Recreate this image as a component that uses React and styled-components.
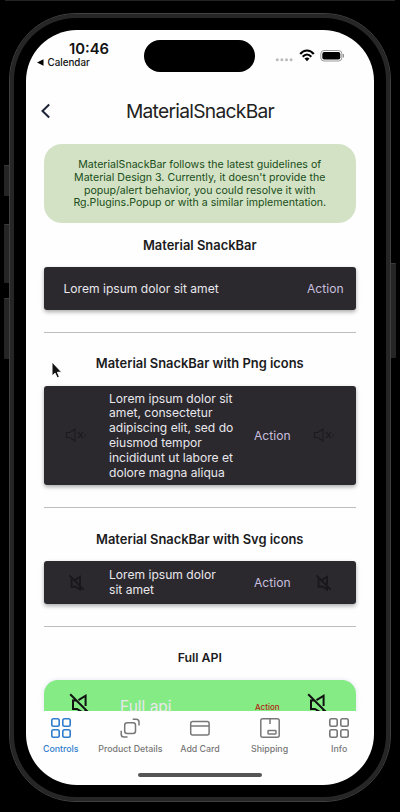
import React from "react";
import styled, { createGlobalStyle } from "styled-components";

const Global = createGlobalStyle`
  * { box-sizing: border-box; }
  html, body { margin: 0; background: #000; }
  body { font-family: Inter, "Liberation Sans", sans-serif; overflow: hidden; }
`;

const Stage = styled.div`
  position: relative;
  width: 400px;
  height: 812px;
  padding: 12.5px 9px 10px;
  background: #000;
  overflow: hidden;
`;

const TopEdge = styled.div`
  position: absolute;
  top: 0;
  left: 5px;
  width: 390px;
  height: 1px;
  background: #242424;
`;

const SideButton = styled.div`
  position: absolute;
  left: ${(p) => (p.$right ? 390 : 4)}px;
  top: ${(p) => p.$top}px;
  width: 6px;
  height: ${(p) => p.$height}px;
  background: #252525;
  border-top: 1px solid #3a3a3a;
  border-radius: ${(p) => (p.$right ? "0 1px 1px 0" : "1px 0 0 1px")};
`;

const Shell = styled.div`
  position: relative;
  display: flex;
  width: 382px;
  height: 789.5px;
  padding: 16px 16px 15.5px;
  border: 1.5px solid #404040;
  border-radius: 67px;
  background: #000;
  box-shadow: inset 0 0 0 4px #262626;
`;

const Screen = styled.div`
  width: 348px;
  height: 755px;
  border-radius: 51px;
  background: #fefefe;
  overflow: hidden;
  display: flex;
  flex-direction: column;
`;

const StatusBar = styled.header`
  display: grid;
  grid-template-columns: 118px 112px 1fr;
  height: 54px;
  flex: none;
`;

const ClockBlock = styled.div`
  padding-top: 11.5px;
  color: #111;
`;

const Clock = styled.div`
  padding-left: 43px;
  font-size: 14.8px;
  line-height: 16px;
  font-weight: 600;
  white-space: nowrap;
`;

const BackApp = styled.div`
  display: flex;
  align-items: center;
  gap: 3.5px;
  padding-left: 11px;
  font-size: 9.8px;
  line-height: 11px;
  font-weight: 500;
`;

const Island = styled.div`
  margin-top: 10px;
  width: 111px;
  height: 32.5px;
  border-radius: 17px;
  background: #000;
`;

const StatusIcons = styled.div`
  display: flex;
  gap: 5.5px;
  padding: 19px 0 0 19px;
`;

const TitleBar = styled.div`
  display: grid;
  grid-template-columns: 40px 1fr 40px;
  align-items: center;
  height: 54px;
  flex: none;
`;

const BackButton = styled.button`
  display: flex;
  padding: 0 0 0 14px;
  border: 0;
  background: none;
`;

const Title = styled.h1`
  margin: 0;
  text-align: center;
  font-size: 19.2px;
  font-weight: 400;
  letter-spacing: -0.7px;
  color: #222;
  white-space: nowrap;
`;

const Content = styled.main`
  flex: none;
  height: 573px;
  padding: 6.5px 18px 0 17.5px;
  overflow: hidden;
`;

const Notice = styled.p`
  margin: 0;
  height: 79px;
  padding-top: 15.3px;
  border-radius: 18px;
  background: #d3e2c4;
  color: #1a4d1a;
  text-align: center;
  font-size: 10.6px;
  line-height: 12.67px;
  white-space: pre;
`;

const Heading = styled.h2`
  margin: 0;
  height: ${(p) => (p.$first ? 44 : 53)}px;
  padding-top: ${(p) => (p.$first ? 0 : 9)}px;
  display: flex;
  align-items: center;
  justify-content: center;
  font-size: ${(p) => (p.$short ? 12.3 : 12.9)}px;
  font-weight: 600;
  color: #1b1b1d;
  white-space: nowrap;
`;

const SnackBar = styled.div`
  display: grid;
  grid-template-columns: ${(p) => (p.$icons ? "65.5px 145px 1fr 65px" : "20px 1fr 49px")};
  align-items: center;
  height: ${(p) => p.$height}px;
  border-radius: ${(p) => (p.$full ? 14 : 3)}px;
  background: ${(p) => (p.$full ? "#85eb85" : "#2b292e")};
  box-shadow: ${(p) => (p.$full ? "0 0 4px #9999dd40" : "0 2px 4px #00000055")};
`;

const Message = styled.div`
  color: #e9e7ec;
  font-size: ${(p) => (p.$large ? 15.5 : 12.1)}px;
  line-height: 14.8px;
  white-space: pre;
  padding-top: 1.4px;
  padding-left: ${(p) => (p.$large ? 11 : 0)}px;
`;

const ActionLabel = styled.button`
  border: 0;
  padding: 0 0 0 ${(p) => (p.$alert ? 1 : 0)}px;
  background: none;
  text-align: left;
  font-family: inherit;
  font-size: ${(p) => (p.$alert ? 8 : 12.1)}px;
  font-weight: ${(p) => (p.$alert ? 500 : 400)};
  color: ${(p) => (p.$alert ? "#b32616" : "#c8bfde")};
`;

const IconSlot = styled.div`
  display: flex;
  justify-content: center;
  align-items: center;
`;

const LargeIconSlot = styled.div`
  align-self: start;
  padding: 13.5px 0 0 ${(p) => (p.$trailing ? 16 : 25)}px;
`;

const Rule = styled.hr`
  margin: 22px 0 0;
  border: 0;
  height: 1px;
  background: #bdbdbd;
`;

const TabBar = styled.nav`
  display: grid;
  grid-template-columns: repeat(5, 69.6px);
  height: 60px;
  flex: none;
  padding-top: 6px;
`;

const Tab = styled.div`
  display: flex;
  flex-direction: column;
  align-items: center;
  gap: 4px;
  font-size: 8.8px;
  line-height: 12px;
  font-weight: 500;
  white-space: nowrap;
  color: ${(p) => (p.$active ? "#2f7dcc" : "#777")};
`;

const HomeIndicator = styled.div`
  width: 124px;
  height: 4.5px;
  margin: 2.3px auto 0;
  border-radius: 3px;
  background: #555;
`;

const Pointer = styled.svg`
  position: absolute;
  left: 50px;
  top: 360px;
`;

const Signal = () => (
  <svg width="18" height="14" viewBox="0 0 18 14" fill="#bbb">
    <circle cx="2.3" cy="10.8" r="1.5" />
    <circle cx="6.9" cy="10.8" r="1.5" />
    <circle cx="11.5" cy="10.8" r="1.5" />
    <circle cx="16.1" cy="10.8" r="1.5" />
  </svg>
);

const Wifi = () => (
  <svg width="16" height="14" viewBox="0 0 16 14" fill="none" stroke="#000" strokeWidth="2.1">
    <path d="M1.2 5C5 .4 11 .4 14.8 5M3.7 7.7C6.3 4.8 9.7 4.8 12.3 7.7" />
    <path d="M8 12.2 5.5 9.6q2.5-2 5 0z" fill="#000" stroke="none" />
  </svg>
);

const Battery = () => (
  <svg width="25" height="14" viewBox="0 0 25 14">
    <rect x="0.8" y="1.5" width="21" height="10.5" rx="3.2" fill="none" stroke="#999" />
    <rect x="2.3" y="3" width="18" height="7.5" rx="2" />
    <path d="M23.3 5v3.5" stroke="#888" strokeWidth="1.2" />
  </svg>
);

const SpeakerOff = () => (
  <svg width="22" height="16" viewBox="0 0 22 16" fill="none" stroke="#1d1b20" strokeWidth="1.2">
    <path d="M1.5 5.5H5L10 2v12l-5-3.5H1.5zM13 5l5 6M18 5l-5 6M20 7.5v2" />
  </svg>
);

const MutedIcon = () => (
  <svg width="17" height="17" viewBox="0 0 24 24" fill="none" stroke="#19171b" strokeWidth="2.6">
    <path d="M2 2l20 20M5 7v11h6l6 4v-5M9 9l8-5v11" />
  </svg>
);

const LargeMutedIcon = () => (
  <svg width="22" height="22" viewBox="0 0 22 22" fill="none" stroke="#111" strokeWidth="2">
    <path d="M1.2 1.2 20.5 20.5M7 7.6H4V16h4l8.4 5v-4M9.5 7.2l7.1-4.5v10.2" />
  </svg>
);

const GridIcon = () => (
  <svg width="22" height="22" viewBox="0 0 22 22" fill="none" stroke="currentColor" strokeWidth="1.6">
    <rect x="1.8" y="1.8" width="7.4" height="7.4" rx="1.7" />
    <rect x="12.8" y="1.8" width="7.4" height="7.4" rx="1.7" />
    <rect x="1.8" y="12.8" width="7.4" height="7.4" rx="1.7" />
    <rect x="12.8" y="12.8" width="7.4" height="7.4" rx="1.7" />
  </svg>
);

const LayersIcon = () => (
  <svg width="22" height="22" viewBox="0 0 22 22" fill="none" stroke="currentColor" strokeWidth="1.5">
    <rect x="5.7" y="5.7" width="10.8" height="10.8" rx="2.5" />
    <path d="M13.7 2.2h3.5q2.8 0 2.8 2.8v3.5M2.2 13.7v3.5Q2.2 20 5 20h3.5" />
  </svg>
);

const CardIcon = () => (
  <svg width="22" height="22" viewBox="0 0 22 22" fill="none" stroke="currentColor" strokeWidth="1.5">
    <rect x="1.7" y="4.5" width="18.4" height="13.4" rx="2" />
    <path d="M2 9h18" />
  </svg>
);

const BoxIcon = () => (
  <svg width="22" height="22" viewBox="0 0 22 22" fill="none" stroke="currentColor" strokeWidth="1.5">
    <rect x="1.8" y="1.8" width="18.4" height="18.4" rx="2" />
    <path d="M11 2v5" />
    <rect x="9" y="13.5" width="8" height="3.5" rx=".7" />
  </svg>
);

const tabs = [
  ["Controls", GridIcon],
  ["Product Details", LayersIcon],
  ["Add Card", CardIcon],
  ["Shipping", BoxIcon],
  ["Info", GridIcon],
];

export default function App() {
  return (
    <Stage>
      <Global />
      <TopEdge />
      <SideButton $top={165} $height={31} />
      <SideButton $top={224} $height={59} />
      <SideButton $top={298} $height={61} />
      <SideButton $right $top={263} $height={95} />
      <Shell>
        <Screen>
          <StatusBar>
            <ClockBlock>
              <Clock>10:46</Clock>
              <BackApp>
                <svg width="7" height="7" viewBox="0 0 7 7"><path d="M0 3.5 6.5.3v6.4z" /></svg>
                Calendar
              </BackApp>
            </ClockBlock>
            <Island />
            <StatusIcons>
              <Signal />
              <Wifi />
              <Battery />
            </StatusIcons>
          </StatusBar>
          <TitleBar>
            <BackButton>
              <svg width="12" height="16" viewBox="0 0 12 16" fill="none" stroke="#1e2438" strokeWidth="2">
                <path d="M9.2 1.5 2.5 8l6.7 6.5" />
              </svg>
            </BackButton>
            <Title>MaterialSnackBar</Title>
          </TitleBar>
          <Content>
            <Notice>{"MaterialSnackBar follows the latest guidelines of\nMaterial Design 3. Currently, it doesn't provide the\npopup/alert behavior, you could resolve it with\nRg.Plugins.Popup or with a similar implementation."}</Notice>
            <Heading $first>Material SnackBar</Heading>
            <SnackBar $height={42.5}>
              <span />
              <Message>Lorem ipsum dolor sit amet</Message>
              <ActionLabel>Action</ActionLabel>
            </SnackBar>
            <Rule />
            <Heading>Material SnackBar with Png icons</Heading>
            <SnackBar $icons $height={99.5}>
              <IconSlot><SpeakerOff /></IconSlot>
              <Message>{"Lorem ipsum dolor sit\namet, consectetur\nadipiscing elit, sed do\neiusmod tempor\nincididunt ut labore et\ndolore magna aliqua"}</Message>
              <ActionLabel>Action</ActionLabel>
              <IconSlot><SpeakerOff /></IconSlot>
            </SnackBar>
            <Rule />
            <Heading>Material SnackBar with Svg icons</Heading>
            <SnackBar $icons $height={42.5}>
              <IconSlot><MutedIcon /></IconSlot>
              <Message>{"Lorem ipsum dolor\nsit amet"}</Message>
              <ActionLabel>Action</ActionLabel>
              <IconSlot><MutedIcon /></IconSlot>
            </SnackBar>
            <Rule />
            <Heading $short>Full API</Heading>
            <SnackBar $icons $full $height={54}>
              <LargeIconSlot><LargeMutedIcon /></LargeIconSlot>
              <Message $large>Full api</Message>
              <ActionLabel $alert>Action</ActionLabel>
              <LargeIconSlot $trailing><LargeMutedIcon /></LargeIconSlot>
            </SnackBar>
          </Content>
          <TabBar>
            {tabs.map(([label, Icon], i) => (
              <Tab key={label} $active={i === 0}><Icon />{label}</Tab>
            ))}
          </TabBar>
          <HomeIndicator />
        </Screen>
      </Shell>
      <Pointer width="14" height="20" viewBox="0 0 14 20">
        <path d="M2 2v14l3.1-2.8 2 4.6 2.3-1-2-4.5h4.3z" fill="#111" stroke="#fff" strokeWidth="1" />
      </Pointer>
    </Stage>
  );
}
